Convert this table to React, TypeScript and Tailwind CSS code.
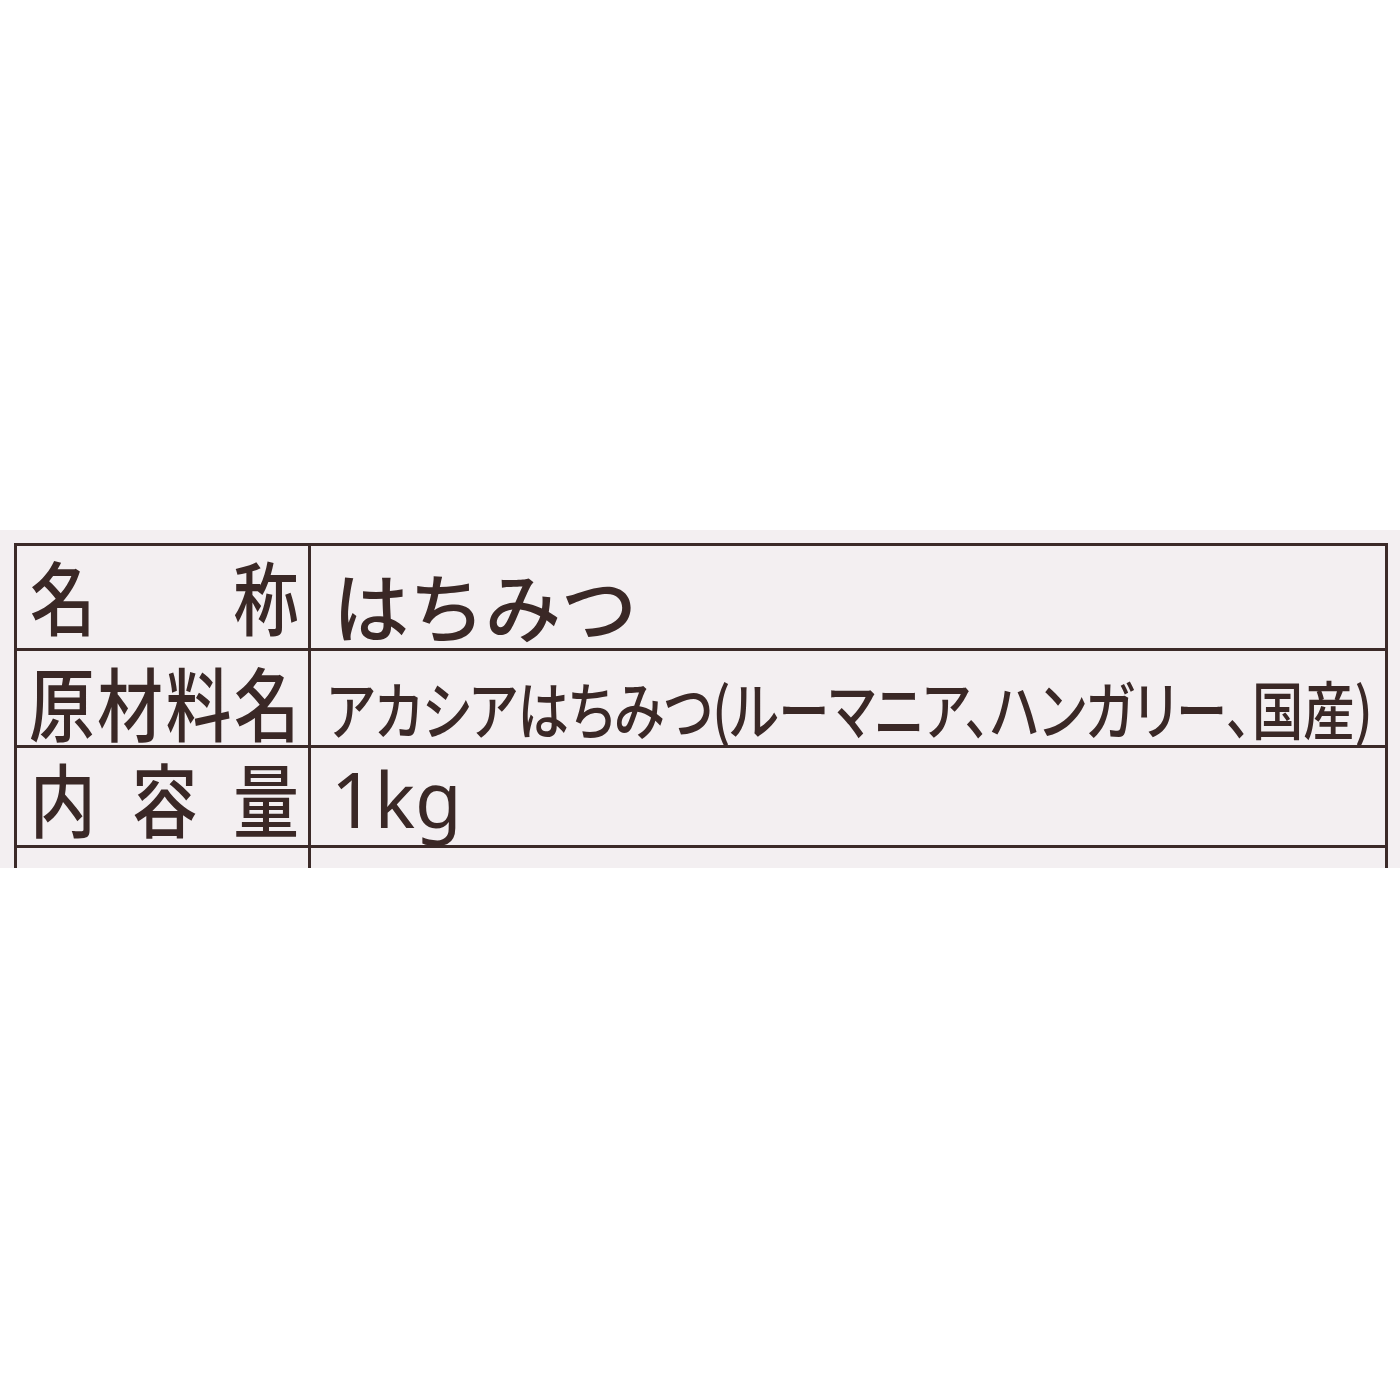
import React from "react";

const ink = "text-[#3a2826]";
const jp = "[font-family:'Noto_Sans_CJK_JP','Noto_Sans',sans-serif]";

export default function App() {
  return (
    <div className={`w-[1400px] h-[1400px] bg-white flex flex-col ${jp}`}>
      <div className="h-[530px] shrink-0" />
      <div className="h-[338px] shrink-0 bg-[#f3eff1] overflow-hidden pt-[13px] pl-[14px] pr-[12px]">
        <div className="border-[3px] border-b-0 border-[#3b2a28]">
          {/* Row 1 */}
          <div className="grid grid-cols-[294px_1fr] h-[105px] border-b-[3px] border-[#3b2a28]">
            <div className="border-r-[3px] border-[#3b2a28] flex items-center pl-[13px]">
              <div className={`w-[328px] -mr-[59px] shrink-0 origin-left scale-x-[0.82] flex justify-between text-[80px] leading-none font-medium ${ink} -mt-[6px]`}>
                <span>名</span>
                <span>称</span>
              </div>
            </div>
            <div className="flex items-center pl-[22px]">
              <span className={`text-[76px] leading-none font-medium ${ink} mt-[14px]`}>はちみつ</span>
            </div>
          </div>
          {/* Row 2 */}
          <div className="grid grid-cols-[294px_1fr] h-[97px] border-b-[3px] border-[#3b2a28]">
            <div className="border-r-[3px] border-[#3b2a28] flex items-center pl-[12px]">
              <div className={`w-[330px] -mr-[59px] shrink-0 origin-left scale-x-[0.82] flex justify-between text-[80px] leading-none font-medium ${ink} mt-[4px]`}>
                <span>原</span>
                <span>材</span>
                <span>料</span>
                <span>名</span>
              </div>
            </div>
            <div className="flex items-center pl-[16px] min-w-0">
              <span className={`inline-block whitespace-nowrap shrink-0 -mr-[240px] origin-left scale-x-[0.814] text-[63px] leading-none font-medium ${ink} mt-[16px] [font-feature-settings:'palt']`}>
                アカシアはちみつ(ルーマニア、ハンガリー、国産)
              </span>
            </div>
          </div>
          {/* Row 3 */}
          <div className="grid grid-cols-[294px_1fr] h-[100px] border-b-[3px] border-[#3b2a28]">
            <div className="border-r-[3px] border-[#3b2a28] flex items-center pl-[13px]">
              <div className={`w-[328px] -mr-[59px] shrink-0 origin-left scale-x-[0.82] flex justify-between text-[80px] leading-none font-medium ${ink} -mt-[2px]`}>
                <span>内</span>
                <span>容</span>
                <span>量</span>
              </div>
            </div>
            <div className="flex items-center pl-[20px]">
              <span className={`text-[76px] leading-none ${ink} [font-family:'Noto_Sans',sans-serif] mt-[4px]`}>1kg</span>
            </div>
          </div>
          {/* Row 4 (cut off) */}
          <div className="grid grid-cols-[294px_1fr] h-[80px]">
            <div className="border-r-[3px] border-[#3b2a28]" />
            <div />
          </div>
        </div>
      </div>
      <div className="flex-1" />
    </div>
  );
}
